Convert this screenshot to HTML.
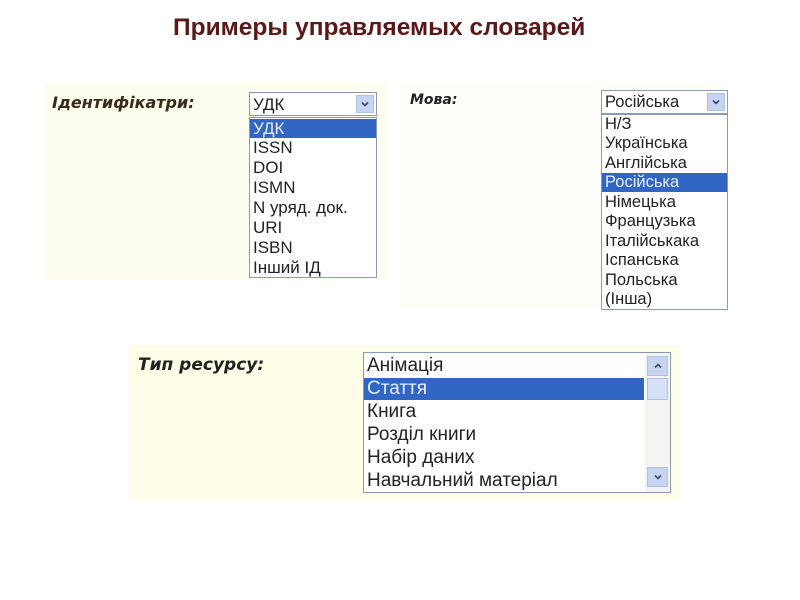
<!DOCTYPE html>
<html><head><meta charset="utf-8"><style>
body{margin:0;width:800px;height:600px;background:#fff;position:relative;overflow:hidden;font-family:"Liberation Sans",sans-serif}
.a{position:absolute}
.title{left:173px;top:14px;font-size:24.5px;font-weight:bold;color:#5a1818;white-space:nowrap}
.lbl{font-style:italic;font-weight:bold;color:#222;font-family:"DejaVu Sans","Liberation Sans",sans-serif}
.box{border:1px solid #8a9ab0;background:#fff;box-sizing:border-box}
.it{position:absolute;left:0;right:0;color:#222;padding-left:3px;white-space:nowrap;font-family:"Liberation Sans",sans-serif}
.sel{background:#3166c4;color:#e8f0ff}
.arr{position:absolute;background:#c6d4f2;border:1px solid #b0c0e0;box-sizing:border-box}
.arr svg{position:absolute;left:50%;top:50%;margin:-4px 0 0 -4px}
</style></head><body>
<div class="a title">Примеры управляемых словарей</div>

<div class="a" style="left:45px;top:82px;width:342px;height:198px;background:#fdfdf0"></div>
<div class="a lbl" style="left:52px;top:93px;font-size:16px;color:#3a2a1a">Ідентифікатри:</div>
<div class="a box" style="left:249px;top:92px;width:128px;height:24px">
 <div class="it" style="top:2px;font-size:17px">УДК</div>
 <div class="arr" style="right:2px;top:2px;width:18px;height:18px"><svg width="8" height="8"><path d="M1 2.5L4 5.5L7 2.5" stroke="#3a4a70" stroke-width="1.6" fill="none"/></svg></div>
</div>
<div class="a box" style="left:249px;top:117px;width:128px;height:161px;font-size:17px">
 <div class="it sel" style="top:1px;height:19px;line-height:19px">УДК</div>
 <div class="it" style="top:20px;line-height:19px">ISSN</div>
 <div class="it" style="top:40px;line-height:19px">DOI</div>
 <div class="it" style="top:60px;line-height:19px">ISMN</div>
 <div class="it" style="top:80px;line-height:19px">N уряд. док.</div>
 <div class="it" style="top:100px;line-height:19px">URI</div>
 <div class="it" style="top:120px;line-height:19px">ISBN</div>
 <div class="it" style="top:140px;line-height:19px">Інший ІД</div>
</div>

<div class="a" style="left:398px;top:82px;width:334px;height:228px;background:#fefefb"></div>
<div class="a lbl" style="left:410px;top:92px;font-size:14px">Мова:</div>
<div class="a box" style="left:601px;top:90px;width:127px;height:24px">
 <div class="it" style="top:2px;font-size:16.5px">Російська</div>
 <div class="arr" style="right:2px;top:2px;width:18px;height:18px"><svg width="8" height="8"><path d="M1 2.5L4 5.5L7 2.5" stroke="#3a4a70" stroke-width="1.6" fill="none"/></svg></div>
</div>
<div class="a box" style="left:601px;top:114px;width:127px;height:196px;font-size:16.5px">
 <div class="it" style="top:0px;line-height:19px">Н/З</div>
 <div class="it" style="top:19px;line-height:19px">Українська</div>
 <div class="it" style="top:38.5px;line-height:19px">Англійська</div>
 <div class="it sel" style="top:58px;height:19px;line-height:19px">Російська</div>
 <div class="it" style="top:77.5px;line-height:19px">Німецька</div>
 <div class="it" style="top:97px;line-height:19px">Французька</div>
 <div class="it" style="top:116.5px;line-height:19px">Італійськака</div>
 <div class="it" style="top:136px;line-height:19px">Іспанська</div>
 <div class="it" style="top:155.5px;line-height:19px">Польська</div>
 <div class="it" style="top:175px;line-height:19px">(Інша)</div>
</div>

<div class="a" style="left:130px;top:345px;width:550px;height:155px;background:#fdfde8"></div>
<div class="a lbl" style="left:138px;top:355px;font-size:17px">Тип ресурсу:</div>
<div class="a box" style="left:363px;top:352px;width:308px;height:141px;font-size:19px">
 <div class="it" style="top:2px;line-height:22px">Анімація</div>
 <div class="it sel" style="top:25px;height:22px;line-height:22px;right:26px">Стаття</div>
 <div class="it" style="top:48px;line-height:22px">Книга</div>
 <div class="it" style="top:71px;line-height:22px">Розділ книги</div>
 <div class="it" style="top:94px;line-height:22px">Набір даних</div>
 <div class="it" style="top:117px;line-height:22px">Навчальний матеріал</div>
 <div class="a" style="right:0;top:0;width:25px;height:139px;background:#f4f4f0"></div>
 <div class="arr" style="right:2px;top:3px;width:21px;height:20px"><svg width="8" height="8"><path d="M1 5.5L4 2.5L7 5.5" stroke="#3a4a70" stroke-width="1.6" fill="none"/></svg></div>
 <div class="arr" style="right:2px;top:25px;width:21px;height:22px;background:#d6e0f6"></div>
 <div class="arr" style="right:2px;top:114px;width:21px;height:20px"><svg width="8" height="8"><path d="M1 2.5L4 5.5L7 2.5" stroke="#3a4a70" stroke-width="1.6" fill="none"/></svg></div>
</div>
</body></html>
